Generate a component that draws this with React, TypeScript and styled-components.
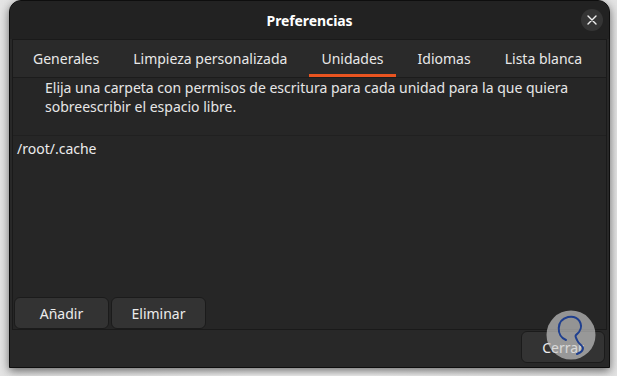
import styled, { createGlobalStyle } from "styled-components";

const GlobalStyle = createGlobalStyle`
  html, body {
    margin: 0;
    padding: 0;
    background: #ececec;
    font-family: "Noto Sans", "DejaVu Sans", sans-serif;
  }
`;

const Page = styled.div`
  width: 617px;
  height: 376px;
  padding-left: 9px;
  box-sizing: border-box;
  background: linear-gradient(90deg, #e4e4e4, #f4f4f4 40%, #f4f4f4 60%, #e4e4e4);
  overflow: hidden;
`;

const Window = styled.div`
  width: 601px;
  height: 368px;
  box-sizing: border-box;
  background: #282828;
  border: 1px solid #0e0e0e;
  border-radius: 12px 12px 0 0;
  box-shadow: 0 3px 10px rgba(0, 0, 0, 0.55);
  display: flex;
  flex-direction: column;
  overflow: hidden;
`;

const HeaderBar = styled.div`
  height: 38px;
  flex: none;
  background: #222222;
  display: grid;
  grid-template-columns: 1fr auto 1fr;
  align-items: center;
  padding: 0 6px;
`;

const Title = styled.div`
  grid-column: 2;
  color: #ffffff;
  font-weight: 700;
  font-size: 14px;
  letter-spacing: -0.1px;
`;

const CloseButton = styled.div`
  justify-self: end;
  width: 22px;
  height: 22px;
  border-radius: 50%;
  background: #353535;
  display: flex;
  align-items: center;
  justify-content: center;
`;

const Notebook = styled.div`
  margin: 0 2px;
  height: 289px;
  flex: none;
  border: 1px solid #1a1a1a;
  background: #262626;
  display: flex;
  flex-direction: column;
`;

const TabBar = styled.div`
  height: 37px;
  flex: none;
  display: flex;
  align-items: stretch;
  padding-left: 8px;
  border-bottom: 1px solid #1c1c1c;
  background: #2a2a2a;
`;

const Tab = styled.div<{ $active?: boolean }>`
  padding: 0 12px;
  margin-right: 10px;
  display: flex;
  align-items: center;
  color: #e8e8e8;
  font-size: 14px;
  box-shadow: ${(p) => (p.$active ? "inset 0 -3px 0 #e95420" : "none")};
`;

const Description = styled.div`
  height: 57px;
  flex: none;
  padding: 0 0 0 32px;
  color: #e6e6e6;
  font-size: 14px;
  line-height: 19px;
  border-bottom: 1px solid #202020;
`;

const ListArea = styled.div`
  flex: 1;
  padding: 3px 4px;
  color: #ececec;
  font-size: 14px;
`;

const ButtonRow = styled.div`
  display: flex;
  gap: 2px;
  padding-left: 1px;
`;

const Button = styled.div<{ $width: number }>`
  width: ${(p) => p.$width}px;
  height: 32px;
  box-sizing: border-box;
  border: 1px solid #1b1b1b;
  border-radius: 6px;
  background: #333333;
  color: #ececec;
  font-size: 14px;
  display: flex;
  align-items: center;
  justify-content: center;
`;

const Footer = styled.div`
  flex: 1;
  display: flex;
  justify-content: flex-end;
  align-items: flex-start;
  padding: 1px 4px 0 0;
  position: relative;
`;

const Watermark = styled.svg`
  position: absolute;
  right: 13px;
  top: -20px;
`;

export default function App() {
  return (
    <>
      <GlobalStyle />
      <Page>
        <Window>
          <HeaderBar>
            <Title>Preferencias</Title>
            <CloseButton>
              <svg width="10" height="10" viewBox="0 0 10 10">
                <path d="M1 1 L9 9 M9 1 L1 9" stroke="#f0f0f0" strokeWidth="1.4" strokeLinecap="round" />
              </svg>
            </CloseButton>
          </HeaderBar>
          <Notebook>
            <TabBar>
              <Tab>Generales</Tab>
              <Tab>Limpieza personalizada</Tab>
              <Tab $active>Unidades</Tab>
              <Tab>Idiomas</Tab>
              <Tab>Lista blanca</Tab>
            </TabBar>
            <Description>
              Elija una carpeta con permisos de escritura para cada unidad para la que quiera
              <br />
              sobreescribir el espacio libre.
            </Description>
            <ListArea>/root/.cache</ListArea>
            <ButtonRow>
              <Button $width={95}>Añadir</Button>
              <Button $width={95}>Eliminar</Button>
            </ButtonRow>
          </Notebook>
          <Footer>
            <Button $width={84}>Cerrar</Button>
            <Watermark width="50" height="50" viewBox="0 0 50 50">
              <circle cx="25" cy="25" r="24.5" fill="rgba(205,205,205,0.66)" />
              <path
                d="M20 30 C10 26 10 10 22 7 C33 5 38 15 33 22 C30 26 28 24 31 30 C33 35 36 34 37 38 C37 42 33 43 31 44"
                fill="none"
                stroke="#1f3f8f"
                strokeWidth="2"
                strokeLinecap="round"
              />
            </Watermark>
          </Footer>
        </Window>
      </Page>
    </>
  );
}
